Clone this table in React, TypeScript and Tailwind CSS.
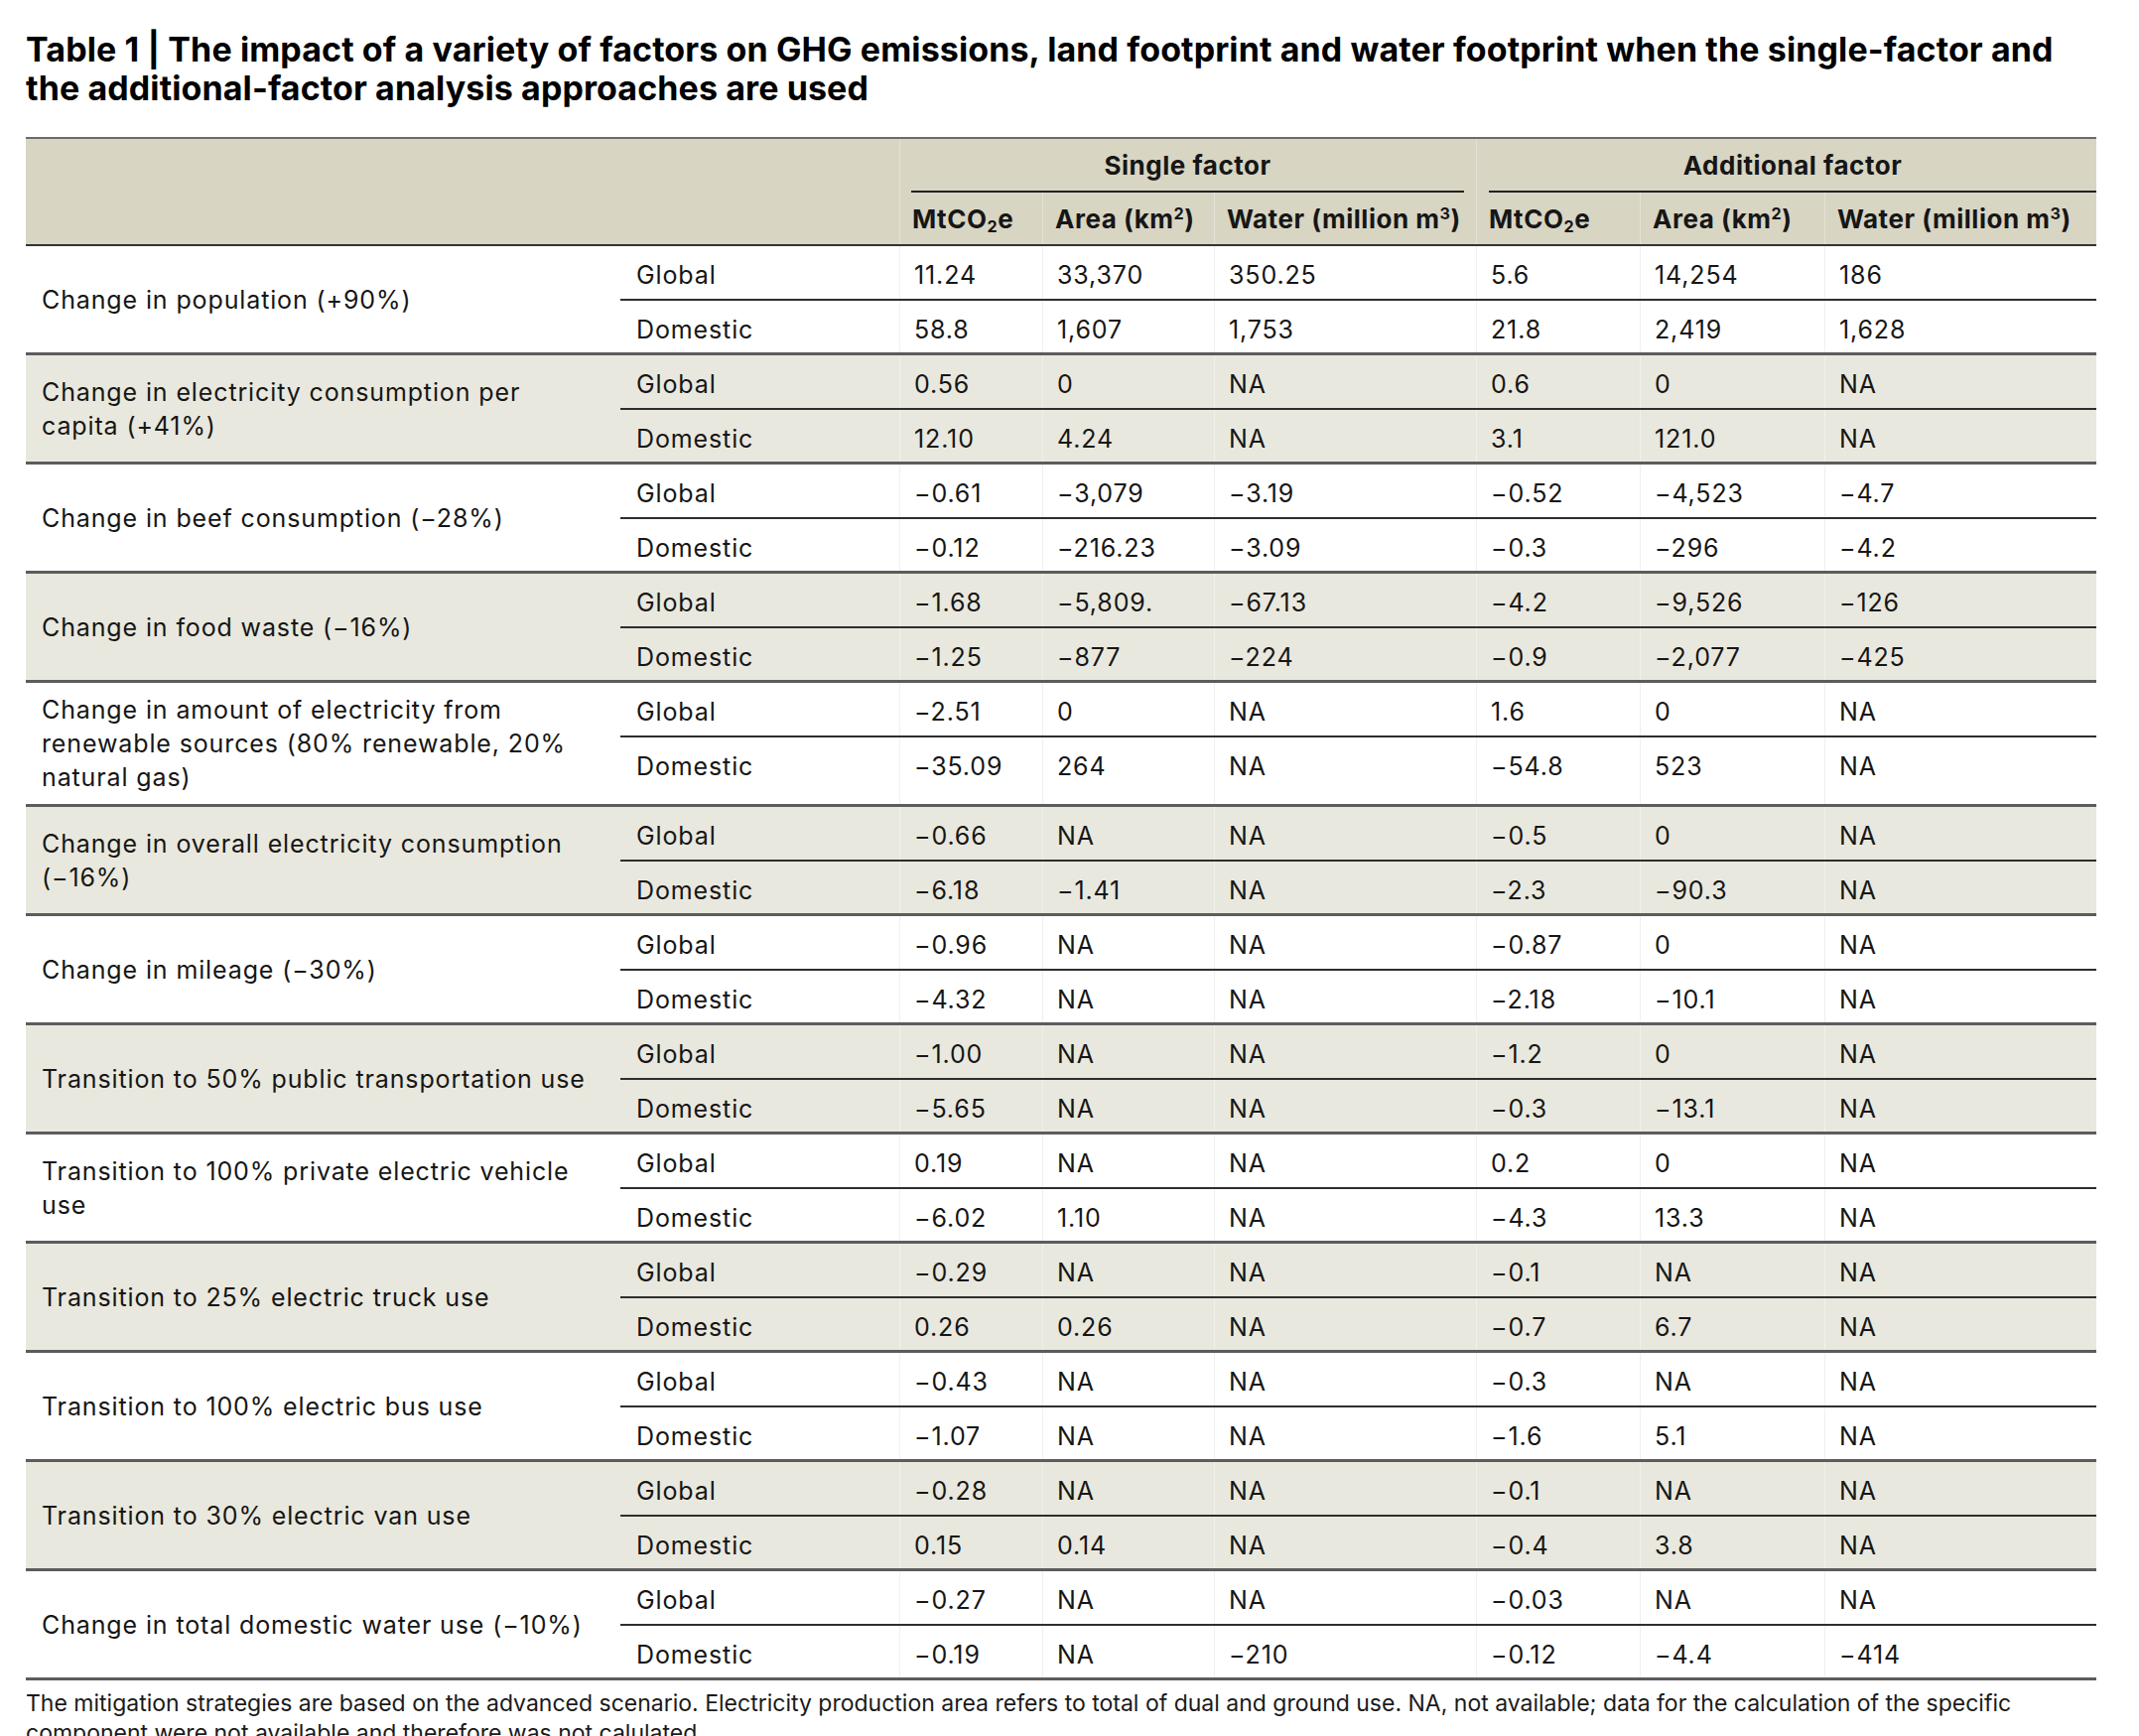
import type { ReactNode } from "react";

type Group = {
  label: ReactNode;
  global: string[];
  domestic: string[];
  shaded?: boolean;
  tall?: boolean;
};

const DATA_W = ["w-[144px]", "w-[173px]", "w-[264px]", "w-[165px]", "w-[186px]", "w-[274px]"];

const GROUPS: Group[] = [
  {
    label: "Change in population (+90%)",
    global: ["11.24", "33,370", "350.25", "5.6", "14,254", "186"],
    domestic: ["58.8", "1,607", "1,753", "21.8", "2,419", "1,628"],
  },
  {
    label: (
      <>
        Change in electricity consumption per
        <br />
        capita (+41%)
      </>
    ),
    global: ["0.56", "0", "NA", "0.6", "0", "NA"],
    domestic: ["12.10", "4.24", "NA", "3.1", "121.0", "NA"],
    shaded: true,
  },
  {
    label: "Change in beef consumption (−28%)",
    global: ["−0.61", "−3,079", "−3.19", "−0.52", "−4,523", "−4.7"],
    domestic: ["−0.12", "−216.23", "−3.09", "−0.3", "−296", "−4.2"],
  },
  {
    label: "Change in food waste (−16%)",
    global: ["−1.68", "−5,809.", "−67.13", "−4.2", "−9,526", "−126"],
    domestic: ["−1.25", "−877", "−224", "−0.9", "−2,077", "−425"],
    shaded: true,
  },
  {
    label: (
      <>
        Change in amount of electricity from
        <br />
        renewable sources (80% renewable, 20%
        <br />
        natural gas)
      </>
    ),
    global: ["−2.51", "0", "NA", "1.6", "0", "NA"],
    domestic: ["−35.09", "264", "NA", "−54.8", "523", "NA"],
    tall: true,
  },
  {
    label: (
      <>
        Change in overall electricity consumption
        <br />
        (−16%)
      </>
    ),
    global: ["−0.66", "NA", "NA", "−0.5", "0", "NA"],
    domestic: ["−6.18", "−1.41", "NA", "−2.3", "−90.3", "NA"],
    shaded: true,
  },
  {
    label: "Change in mileage (−30%)",
    global: ["−0.96", "NA", "NA", "−0.87", "0", "NA"],
    domestic: ["−4.32", "NA", "NA", "−2.18", "−10.1", "NA"],
  },
  {
    label: "Transition to 50% public transportation use",
    global: ["−1.00", "NA", "NA", "−1.2", "0", "NA"],
    domestic: ["−5.65", "NA", "NA", "−0.3", "−13.1", "NA"],
    shaded: true,
  },
  {
    label: (
      <>
        Transition to 100% private electric vehicle
        <br />
        use
      </>
    ),
    global: ["0.19", "NA", "NA", "0.2", "0", "NA"],
    domestic: ["−6.02", "1.10", "NA", "−4.3", "13.3", "NA"],
  },
  {
    label: "Transition to 25% electric truck use",
    global: ["−0.29", "NA", "NA", "−0.1", "NA", "NA"],
    domestic: ["0.26", "0.26", "NA", "−0.7", "6.7", "NA"],
    shaded: true,
  },
  {
    label: "Transition to 100% electric bus use",
    global: ["−0.43", "NA", "NA", "−0.3", "NA", "NA"],
    domestic: ["−1.07", "NA", "NA", "−1.6", "5.1", "NA"],
  },
  {
    label: "Transition to 30% electric van use",
    global: ["−0.28", "NA", "NA", "−0.1", "NA", "NA"],
    domestic: ["0.15", "0.14", "NA", "−0.4", "3.8", "NA"],
    shaded: true,
  },
  {
    label: "Change in total domestic water use (−10%)",
    global: ["−0.27", "NA", "NA", "−0.03", "NA", "NA"],
    domestic: ["−0.19", "NA", "−210", "−0.12", "−4.4", "−414"],
  },
];

function DataRow({ scope, values, grow }: { scope: string; values: string[]; grow?: boolean }) {
  return (
    <div className={grow ? "flex min-h-[52px] flex-1" : "flex h-[55px] border-b-2 border-[#2e2e2e]"}>
      <div className="w-[281px] shrink-0 pl-[16px] pt-[14px] leading-[30px]">{scope}</div>
      {values.map((v, i) => (
        <div
          key={i}
          className={`${DATA_W[i]} shrink-0 border-l border-[#f1f0ea] pl-[14px] pt-[14px] leading-[30px]`}
        >
          {v}
        </div>
      ))}
    </div>
  );
}

function GroupRows({ group }: { group: Group }) {
  return (
    <div
      className={`flex border-b-[3px] border-[#5c5c5c] ${group.shaded ? "bg-[#e9e8de]" : "bg-white"}`}
    >
      <div
        className={`flex w-[599px] shrink-0 items-center pl-[16px] leading-[34px] whitespace-nowrap ${
          group.tall ? "py-[10px]" : ""
        }`}
      >
        <div>{group.label}</div>
      </div>
      <div className="flex flex-col">
        <DataRow scope="Global" values={group.global} />
        <DataRow scope="Domestic" values={group.domestic} grow />
      </div>
    </div>
  );
}

function Unit({ children }: { children: ReactNode }) {
  return <span className="whitespace-nowrap">{children}</span>;
}

export default function App() {
  const heads: ReactNode[] = [
    <Unit>
      MtCO<sub className="text-[0.62em]">2</sub>e
    </Unit>,
    <Unit>
      Area (km<sup className="text-[0.62em]">2</sup>)
    </Unit>,
    <Unit>
      Water (million m<sup className="text-[0.62em]">3</sup>)
    </Unit>,
  ];
  const allHeads = [...heads, ...heads];

  return (
    <div className="min-h-screen bg-white font-['Inter','Liberation_Sans',sans-serif] text-[#161616]">
      <div className="px-[26px] pt-[30px]">
        <h1 className="text-[34px] leading-[39px] font-bold tracking-[0.003em] whitespace-nowrap text-black">
          Table 1 | The impact of a variety of factors on GHG emissions, land footprint and water
          footprint when the single-factor and
          <br />
          the additional-factor analysis approaches are used
        </h1>

        <div className="mt-[30px] w-[2086px] text-[25px] tracking-[0.035em]">
          <div className="border-t-2 border-b-2 border-t-[#6a6a6a] border-b-[#333] bg-[#d8d5c3] text-[26px] font-bold tracking-[0.02em]">
            <div className="flex h-[54px]">
              <div className="w-[880px] shrink-0" />
              <div className="flex w-[581px] shrink-0 border-l border-[#e4e2d6] pr-[12px] pl-[11px]">
                <div className="flex flex-1 items-center justify-center border-b-2 border-[#222]">
                  Single factor
                </div>
              </div>
              <div className="flex w-[625px] shrink-0 border-l border-[#e4e2d6] pl-[12px]">
                <div className="flex flex-1 items-center justify-center border-b-2 border-[#222]">
                  Additional factor
                </div>
              </div>
            </div>
            <div className="flex h-[52px]">
              <div className="w-[880px] shrink-0" />
              {allHeads.map((h, i) => (
                <div
                  key={i}
                  className={`${DATA_W[i]} flex shrink-0 items-center border-l border-[#e4e2d6] pl-[12px]`}
                >
                  {h}
                </div>
              ))}
            </div>
          </div>

          {GROUPS.map((g, i) => (
            <GroupRows key={i} group={g} />
          ))}
        </div>

        <p className="w-[2086px] pt-[8px] text-[23px] leading-[30px] whitespace-nowrap text-[#1a1a1a]">
          The mitigation strategies are based on the advanced scenario. Electricity production area
          refers to total of dual and ground use. NA, not available; data for the calculation of the
          specific
          <br />
          component were not available and therefore was not calulated.
        </p>
      </div>
    </div>
  );
}
